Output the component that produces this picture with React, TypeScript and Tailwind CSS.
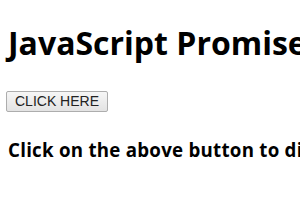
import React from 'react';

export default function App() {
  return (
    <div className="h-[210px] w-[300px] overflow-hidden bg-white px-2 text-black">
      <h1 className="whitespace-nowrap pt-[21px] text-[32px] font-bold leading-[43px] font-['Open_Sans',sans-serif]">
        JavaScript Promises
      </h1>
      <div className="mt-[24px]">
        <button className="h-[21px] rounded-[2px] border border-[#adadad] bg-gradient-to-b from-[#f6f6f6] to-[#e3e3e3] px-[8px] -ml-[2px] text-[14px] leading-[18px] text-[#222] font-['Liberation_Sans',Arial,sans-serif]">
          CLICK HERE
        </button>
      </div>
      <h3 className="mt-[25px] whitespace-nowrap text-[18.72px] font-bold leading-[25px] tracking-[0.25px] font-['Open_Sans',sans-serif]">
        Click on the above button to display the result
      </h3>
    </div>
  );
}
